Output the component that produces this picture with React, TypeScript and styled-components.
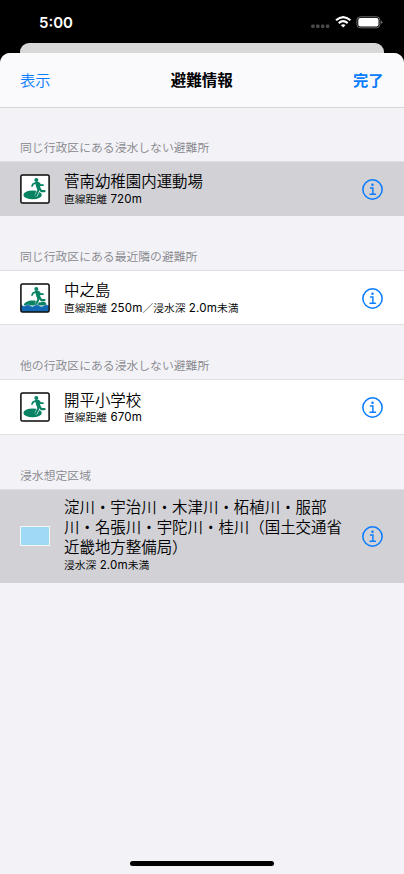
import React from "react";
import styled, { createGlobalStyle } from "styled-components";

const GlobalStyle = createGlobalStyle`
  * { box-sizing: border-box; }
  html, body { margin: 0; background: #000; }
  body { font-family: Inter, "Noto Sans CJK JP", sans-serif; }
`;

const Screen = styled.div`
  width: 404px;
  height: 874px;
  display: flex;
  flex-direction: column;
  overflow: hidden;
  background: #000;
`;

const StatusBar = styled.header`
  height: 43px;
  flex: none;
  display: flex;
  justify-content: space-between;
  padding: 15px 21.5px 0 39px;
`;

const Time = styled.time`
  color: #fff;
  font-size: 15px;
  line-height: 16px;
  font-weight: 600;
`;

const StatusIcons = styled.svg`
  width: 74px;
  height: 16px;
`;

const BackCard = styled.div`
  height: 10px;
  flex: none;
  margin: 0 20px;
  border-radius: 9px 9px 0 0;
  background: #d8d8d8;
`;

const Sheet = styled.main`
  flex: 1;
  display: flex;
  flex-direction: column;
  align-items: stretch;
  border-radius: 10px 10px 0 0;
  overflow: hidden;
  background: #f2f2f7;
`;

const NavBar = styled.nav`
  height: 55px;
  flex: none;
  display: grid;
  grid-template-columns: 1fr auto 1fr;
  align-items: center;
  padding: 2px 20.5px 0 20px;
  background: #fafafd;
  border-bottom: 1px solid #d6d6da;
`;

const NavTitle = styled.h1`
  margin: 0;
  font-size: 15.5px;
  line-height: 20px;
  font-weight: 700;
  color: #000;
`;

const NavButton = styled.button<{ $strong?: boolean }>`
  border: 0;
  padding: 0;
  background: none;
  justify-self: ${(p) => (p.$strong ? "end" : "start")};
  font: inherit;
  font-size: 15.3px;
  line-height: 20px;
  font-weight: ${(p) => (p.$strong ? 700 : 350)};
  color: #0a7cff;
`;

const Section = styled.section`
  flex: none;
`;

const SectionTitle = styled.h2<{ $first?: boolean }>`
  margin: 0;
  height: ${(p) => (p.$first ? 54 : 55)}px;
  padding: ${(p) => (p.$first ? 31 : 32)}px 20px 0;
  font-size: 11.83px;
  line-height: 18px;
  font-weight: 350;
  color: #85858a;
`;

const Row = styled.div<{ $selected?: boolean; $tall?: boolean }>`
  height: ${(p) => (p.$tall ? 93.4 : 54.2)}px;
  display: grid;
  grid-template-columns: 44px 1fr 21px;
  align-items: center;
  padding: 0 21px 0 20px;
  background: ${(p) => (p.$selected ? "#d1d1d6" : "#fff")};
  box-shadow: 0 -1px 0 #dfdfe3, inset 0 -1px 0 ${(p) => (p.$selected ? "#d1d1d6" : "#e0e0e4")};
`;

const Details = styled.div<{ $tall?: boolean }>`
  display: flex;
  flex-direction: column;
  padding-top: ${(p) => (p.$tall ? 1 : 2)}px;
`;

const Name = styled.div`
  font-size: 15.45px;
  line-height: 19.6px;
  font-weight: 350;
  color: #000;
  white-space: pre;
`;

const Meta = styled.div<{ $tall?: boolean }>`
  font-size: 10.75px;
  line-height: ${(p) => (p.$tall ? 18 : 16)}px;
  font-weight: 350;
  color: #000;
  white-space: nowrap;
`;

const Amount = styled.span`
  font-size: 11.6px;
  font-weight: 400;
  letter-spacing: 0.12px;
  line-height: 1;
`;

const InfoButton = styled.button`
  width: 21px;
  height: 21px;
  border: 0;
  padding: 0;
  background: none;
  display: flex;
`;

const Swatch = styled.span`
  width: 30px;
  height: 20px;
  border: 1px solid #f4f6f8;
  background: #9ed9f6;
`;

const HomeArea = styled.footer`
  margin-top: auto;
  padding-bottom: 8px;
  display: flex;
  justify-content: center;
`;

const HomeIndicator = styled.span`
  width: 144px;
  height: 5px;
  border-radius: 3px;
  background: #000;
`;

function ShelterIcon({ flooded }: { flooded?: boolean }) {
  return (
    <svg width="30" height="30" viewBox="0 0 30 30">
      <rect x="0.9" y="0.9" width="28.2" height="28.2" rx="1.6" fill="#fff" />
      {flooded ? (
        <path d="M3.6 22.5C4.5 18.5 11 16.6 16 18L20 19.4C24 17.8 27 19.4 26.4 22.5Z" fill="#078363" />
      ) : (
        <ellipse cx="12.6" cy="20.9" rx="9.2" ry="4.4" fill="#078363" />
      )}
      <path
        d="M18.6 16.2L16.3 20.9"
        fill="none" stroke="#fff" strokeWidth="3.1" strokeLinecap="round"
      />
      <g fill="none" stroke="#078363" strokeLinecap="round" strokeLinejoin="round">
        <path d="M17.4 9.6L18.3 13" strokeWidth="4" />
        <path d="M16.5 8.6L13.1 10L12 12.1M18.6 8.8L20.8 11.2L23 11.2" strokeWidth="1.7" />
        <path d="M18 13.4L18.3 16.6L16 21.2M18.9 13.4L21.3 17.1H24.6" strokeWidth="2.1" />
      </g>
      <circle cx="16.3" cy="6" r="2" fill="#078363" />
      {flooded && (
        <path
          d="M1 20.8Q3.2 24.3 5.5 22.6Q7.8 20.6 10 22.6Q12.3 24.6 14.6 22.6Q16.9 20.6 19.2 22.6Q21.5 24.6 23.8 22.6Q26.5 20.6 29 22.8V29H1Z"
          fill="#1168b3" stroke="#fff" strokeWidth="0.3"
        />
      )}
      <rect x="0.9" y="0.9" width="28.2" height="28.2" rx="1.6" fill="none" stroke="#080808" strokeWidth="1.5" />
    </svg>
  );
}

function Info() {
  return (
    <InfoButton aria-label="詳細">
      <svg width="21" height="21" viewBox="0 0 22 22" fill="none" stroke="#0a7cff">
        <circle cx="11" cy="11" r="10.1" strokeWidth="1.6" />
        <circle cx="11" cy="6.1" r="1.3" fill="#0a7cff" stroke="none" />
        <path d="M8.9 9.5H11.4V15.8M8.4 15.9H14.1" strokeWidth="1.5" strokeLinecap="round" />
      </svg>
    </InfoButton>
  );
}

type Entry = {
  heading: string;
  name: string;
  meta: string;
  kind: "dry" | "flooded" | "area";
  selected?: boolean;
};

const entries: Entry[] = [
  { heading: "同じ行政区にある浸水しない避難所", name: "菅南幼稚園内運動場", meta: "直線距離 720m", kind: "dry", selected: true },
  { heading: "同じ行政区にある最近隣の避難所", name: "中之島", meta: "直線距離 250m／浸水深 2.0m未満", kind: "flooded" },
  { heading: "他の行政区にある浸水しない避難所", name: "開平小学校", meta: "直線距離 670m", kind: "dry" },
  {
    heading: "浸水想定区域",
    name: "淀川・宇治川・木津川・柘植川・服部\n川・名張川・宇陀川・桂川（国土交通省\n近畿地方整備局）",
    meta: "浸水深 2.0m未満",
    kind: "area",
    selected: true,
  },
];

function MetaLine({ text, tall }: { text: string; tall: boolean }) {
  return (
    <Meta $tall={tall}>
      {text.split(/( [\d.]+m)/).map((part, i) => (i % 2 ? <Amount key={i}>{part}</Amount> : part))}
    </Meta>
  );
}

export default function App() {
  return (
    <>
      <GlobalStyle />
      <Screen>
        <StatusBar>
          <Time>5:00</Time>
          <StatusIcons viewBox="0 0 74 16">
            <g fill="#4a4a4a">
              <rect x="2.2" y="9.5" width="3.4" height="3.4" rx="1" />
              <rect x="7.1" y="9.5" width="3.4" height="3.4" rx="1" />
              <rect x="12" y="9.5" width="3.4" height="3.4" rx="1" />
              <rect x="16.9" y="9.5" width="3.4" height="3.4" rx="1" />
            </g>
            <g fill="none" stroke="#fff" strokeWidth="2.1">
              <path d="M27 5.3Q34.2 -1.1 41.4 5.3" />
              <path d="M29.7 8.1Q34.2 4.3 38.7 8.1" />
            </g>
            <path d="M31.8 10.1Q34.2 8.2 36.6 10.1L34.2 12.6Z" fill="#fff" />
            <rect x="47.9" y="1.8" width="23" height="11" rx="3.4" fill="none" stroke="#6c6c6c" />
            <rect x="49.3" y="3.1" width="20.2" height="8.4" rx="2" fill="#fff" />
            <path d="M72 5.4Q73.4 6 73.4 7.3Q73.4 8.5 72 9.1Z" fill="#6c6c6c" />
          </StatusIcons>
        </StatusBar>
        <BackCard />
        <Sheet>
          <NavBar>
            <NavButton>表示</NavButton>
            <NavTitle>避難情報</NavTitle>
            <NavButton $strong>完了</NavButton>
          </NavBar>
          {entries.map((e, i) => (
            <Section key={e.heading}>
              <SectionTitle $first={i === 0}>{e.heading}</SectionTitle>
              <Row $selected={e.selected} $tall={e.kind === "area"}>
                {e.kind === "area" ? <Swatch /> : <ShelterIcon flooded={e.kind === "flooded"} />}
                <Details $tall={e.kind === "area"}>
                  <Name>{e.name}</Name>
                  <MetaLine text={e.meta} tall={e.kind === "area"} />
                </Details>
                <Info />
              </Row>
            </Section>
          ))}
          <HomeArea>
            <HomeIndicator />
          </HomeArea>
        </Sheet>
      </Screen>
    </>
  );
}
